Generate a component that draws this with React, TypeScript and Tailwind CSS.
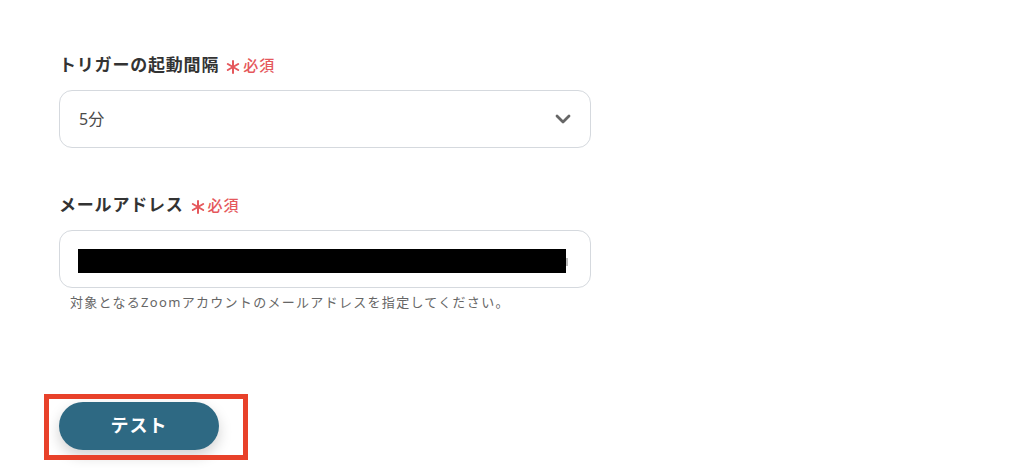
import React from "react";

const font = { fontFamily: '"Noto Sans", "Noto Sans CJK JP", sans-serif' };

function Label({ text }: { text: string }) {
  return (
    <div className="flex items-center h-[24px]">
      <span className="text-[17px] font-bold text-[#333333] tracking-[0.8px]">{text}</span>
      <svg width="14" height="14" viewBox="0 0 14 14" className="ml-[7px] mt-[3px]">
        <g stroke="#e5585c" strokeWidth="2" strokeLinecap="round">
          <line x1="7" y1="1" x2="7" y2="13" />
          <line x1="1.8" y1="4" x2="12.2" y2="10" />
          <line x1="1.8" y1="10" x2="12.2" y2="4" />
        </g>
      </svg>
      <span className="ml-[3px] text-[15px] font-medium text-[#e5585c] tracking-[1px]">必須</span>
    </div>
  );
}

export default function App() {
  return (
    <div className="w-[1032px] h-[468px] bg-white overflow-hidden relative" style={font}>
      <div className="pl-[59px] pt-[53px] w-[592px]">
        <Label text="トリガーの起動間隔" />
        <div className="mt-[13px] h-[58px] w-[532px] rounded-[13px] border border-[#d5d9de] flex items-center justify-between pl-[19px] pr-[19px]">
          <span className="text-[16px] text-[#4a4a4a]">5分</span>
          <svg width="16" height="10" viewBox="0 0 16 10">
            <path d="M2 2 L8 8 L14 2" fill="none" stroke="#666666" strokeWidth="2.8" strokeLinecap="round" strokeLinejoin="round" />
          </svg>
        </div>
        <div className="mt-[45px]">
          <Label text="メールアドレス" />
        </div>
        <div className="mt-[13px] h-[58px] w-[532px] rounded-[13px] border border-[#d5d9de] flex items-center pl-[18px]">
          <div className="h-[24px] w-[488px] bg-black mt-[3px]" />
          <div className="h-[8px] w-[2px] bg-[#bbbbbb] mt-[6px]" />
        </div>
        <div className="mt-[5px] pl-[11px] text-[13px] text-[#666666] tracking-[1.3px]">
          対象となるZoomアカウントのメールアドレスを指定してください。
        </div>
      </div>
      <div className="absolute left-[44px] top-[394px] w-[204px] h-[66px] border-[5px] border-[#e8412a]" />
      <div className="pl-[59px] mt-[89px]">
        <button className="w-[160px] h-[48px] rounded-full bg-[#2e6983] text-white text-[18px] font-bold tracking-[1px] shadow-[0_6px_14px_rgba(0,0,0,0.18)]">
          テスト
        </button>
      </div>
    </div>
  );
}
